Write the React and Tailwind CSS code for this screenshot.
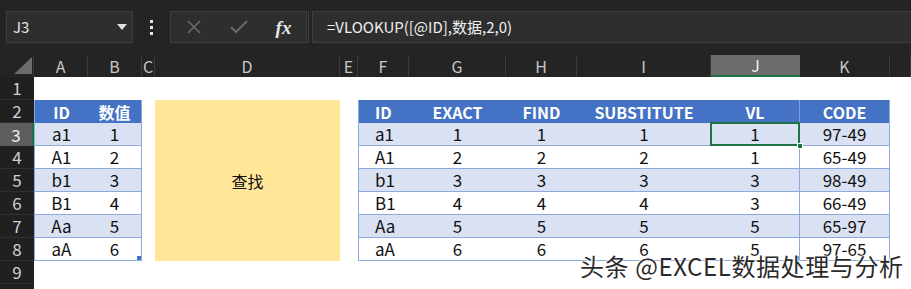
const font = "font-['Noto_Sans_CJK_SC','Noto_Sans',sans-serif]"

const cols = ['A', 'B', 'C', 'D', 'E', 'F', 'G', 'H', 'I', 'J', 'K', '']

const leftRows = [
  ['a1', 1], ['A1', 2], ['b1', 3], ['B1', 4], ['Aa', 5], ['aA', 6],
]

const rightRows = [
  ['a1', 1, 1, 1, 1, '97-49'],
  ['A1', 2, 2, 2, 1, '65-49'],
  ['b1', 3, 3, 3, 3, '98-49'],
  ['B1', 4, 4, 4, 3, '66-49'],
  ['Aa', 5, 5, 5, 5, '65-97'],
  ['aA', 6, 6, 6, 5, '97-65'],
]

function TopBar() {
  return (
    <div className="h-[55px] bg-[#242424] flex items-start pt-[11px] pl-[6px]">
      <div className="w-[127px] h-[32px] bg-[#2e2e2e] border border-[#3e3e3e] flex items-center justify-between pl-[6px] pr-[5px]">
        <span className="text-[15px] text-[#e6e6e6]">J3</span>
        <svg width="10" height="6" viewBox="0 0 10 6"><path d="M0 0h10L5 6z" fill="#e0e0e0" /></svg>
      </div>
      <div className="w-[37px] h-[32px] flex flex-col items-center justify-center gap-[3px]">
        <span className="w-[3px] h-[3px] bg-[#e6e6e6]" />
        <span className="w-[3px] h-[3px] bg-[#e6e6e6]" />
        <span className="w-[3px] h-[3px] bg-[#e6e6e6]" />
      </div>
      <div className="w-[137px] h-[32px] bg-[#2e2e2e] border border-[#3e3e3e] flex items-center">
        <div className="w-[45px] flex justify-center">
          <svg width="16" height="16" viewBox="0 0 16 16"><path d="M2 2l12 12M14 2L2 14" stroke="#6a6a6a" strokeWidth="1.6" /></svg>
        </div>
        <div className="w-[45px] flex justify-center">
          <svg width="18" height="14" viewBox="0 0 18 14"><path d="M1 7l5 5L17 1" stroke="#6a6a6a" strokeWidth="2" fill="none" /></svg>
        </div>
        <div className="w-[45px] flex justify-center">
          <span className="font-['Liberation_Serif',serif] italic font-bold text-[19px] text-[#e8e8e8] leading-none">fx</span>
        </div>
      </div>
      <div className="w-[4px] h-[32px] border-l border-[#3e3e3e] ml-[1px]" />
      <div className="flex-1 h-[32px] bg-[#2e2e2e] border border-[#3e3e3e] border-r-0 flex items-center pl-[14px]">
        <span className="text-[15px] text-[#f0f0f0]">=VLOOKUP([@ID],数据,2,0)</span>
      </div>
    </div>
  )
}

function Sheet() {
  const rowNums = [1, 2, 3, 4, 5, 6, 7, 8, 9, '']
  const cellBorder = 'border-b border-[#8ea9db]'
  return (
    <div className="grid grid-cols-[34px_54px_54px_13px_185px_18px_51px_97px_71px_134px_89px_90px_1fr] grid-rows-[22px_repeat(10,23px)] bg-white">
      {/* column header row */}
      <div className="bg-[#242424] flex items-end justify-end pr-[1px] pb-[3px] border-r border-[#3a3a3a]">
        <svg width="18" height="17" viewBox="0 0 18 17"><path d="M18 0V17H0z" fill="#6b6b6b" /></svg>
      </div>
      {cols.map((c) => (
        <div
          key={c || 'L'}
          className={
            c === 'J'
              ? 'bg-[#6b6b6b] border-b-2 border-[#217346] flex items-center justify-center text-[16px] text-[#f0f0f0]'
              : 'bg-[#242424] border-r border-[#3a3a3a] flex items-center justify-center text-[16px] text-[#c8c8c8]'
          }
        >
          {c}
        </div>
      ))}

      {/* row headers placed in column 1 */}
      {rowNums.map((n, i) => (
        <div
          key={'r' + i}
          style={{ gridRow: i + 2, gridColumn: 1 }}
          className={
            n === 3
              ? 'bg-[#5e5e5e] border-r-2 border-[#217346] flex items-center justify-center text-[17px] text-[#f0f0f0]'
              : 'bg-[#202020] border-b border-[#303030] flex items-center justify-center text-[17px] text-[#cfcfcf]'
          }
        >
          {n}
        </div>
      ))}

      {/* left table header */}
      <div style={{ gridRow: 3, gridColumn: 2 }} className="bg-[#4472c4] border-l border-[#8ea9db] flex items-center justify-center text-[16px] font-bold text-white">ID</div>
      <div style={{ gridRow: 3, gridColumn: 3 }} className="bg-[#4472c4] border-r border-[#8ea9db] flex items-center justify-center text-[16px] font-bold text-white">数值</div>
      {leftRows.map((r, i) => {
        const band = i % 2 === 0 ? 'bg-[#d9e1f2]' : 'bg-white'
        return [
          <div key={'la' + i} style={{ gridRow: i + 4, gridColumn: 2 }} className={`${band} ${cellBorder} border-l flex items-center justify-center text-[17px] text-[#111]`}>{r[0]}</div>,
          <div key={'lb' + i} style={{ gridRow: i + 4, gridColumn: 3 }} className={`${band} ${cellBorder} border-r flex items-center justify-center text-[17px] text-[#111] relative`}>
            {r[1]}
            {i === 5 && <span className="absolute right-0 bottom-0 w-[4px] h-[4px] bg-[#4472c4]" />}
          </div>,
        ]
      })}

      {/* yellow shape */}
      <div style={{ gridRow: '3 / span 7', gridColumn: 5 }} className="bg-[#ffe699] flex items-center justify-center text-[16px] text-[#111]">
        查找
      </div>

      {/* right table header */}
      {['ID', 'EXACT', 'FIND', 'SUBSTITUTE', 'VL', 'CODE'].map((h, j) => (
        <div
          key={'rh' + h}
          style={{ gridRow: 3, gridColumn: j + 7 }}
          className={`bg-[#4472c4] flex items-center text-[16px] font-bold text-white ${j === 0 ? 'pl-[16px] border-l border-[#8ea9db]' : 'justify-center'} ${j === 4 ? 'border-r border-[#7f9edb]' : ''} ${j === 5 ? 'border-r border-[#8ea9db]' : ''}`}
        >
          {h}
        </div>
      ))}
      {rightRows.map((r, i) => {
        const band = i % 2 === 0 ? 'bg-[#d9e1f2]' : 'bg-white'
        const selected = i === 0
        return r.map((v, j) => (
          <div
            key={'rc' + i + '-' + j}
            style={{ gridRow: i + 4, gridColumn: j + 7 }}
            className={`${band} ${cellBorder} flex items-center text-[17px] text-[#111] relative ${j === 0 ? 'pl-[16px] border-l' : 'justify-center'} ${j === 4 || j === 5 ? 'border-r' : ''} ${selected && j === 4 ? 'z-10' : ''}`}
          >
            {v}
            {selected && j === 4 && (
              <>
                <span className="absolute left-[-1px] top-[-1px] right-[-1px] bottom-[-1px] border-2 border-[#217346]" />
                <span className="absolute right-[-4px] bottom-[-4px] w-[6px] h-[6px] bg-[#217346] border border-white" />
              </>
            )}
            {i === 5 && j === 4 && <span className="absolute right-0 bottom-0 w-[4px] h-[4px] bg-[#4472c4]" />}
          </div>
        ))
      })}
    </div>
  )
}

export default function App() {
  return (
    <div className={`w-[911px] h-[289px] overflow-hidden relative ${font}`}>
      <TopBar />
      <Sheet />
      <div className="absolute left-[580px] top-[251px] z-20 text-[24px] leading-[30px] tracking-[0.6px] text-[#2a2a2a] whitespace-nowrap [text-shadow:0_0_2px_#fff,0_0_2px_#fff,0_0_3px_#fff]">
        头条 @EXCEL数据处理与分析
      </div>
    </div>
  )
}
